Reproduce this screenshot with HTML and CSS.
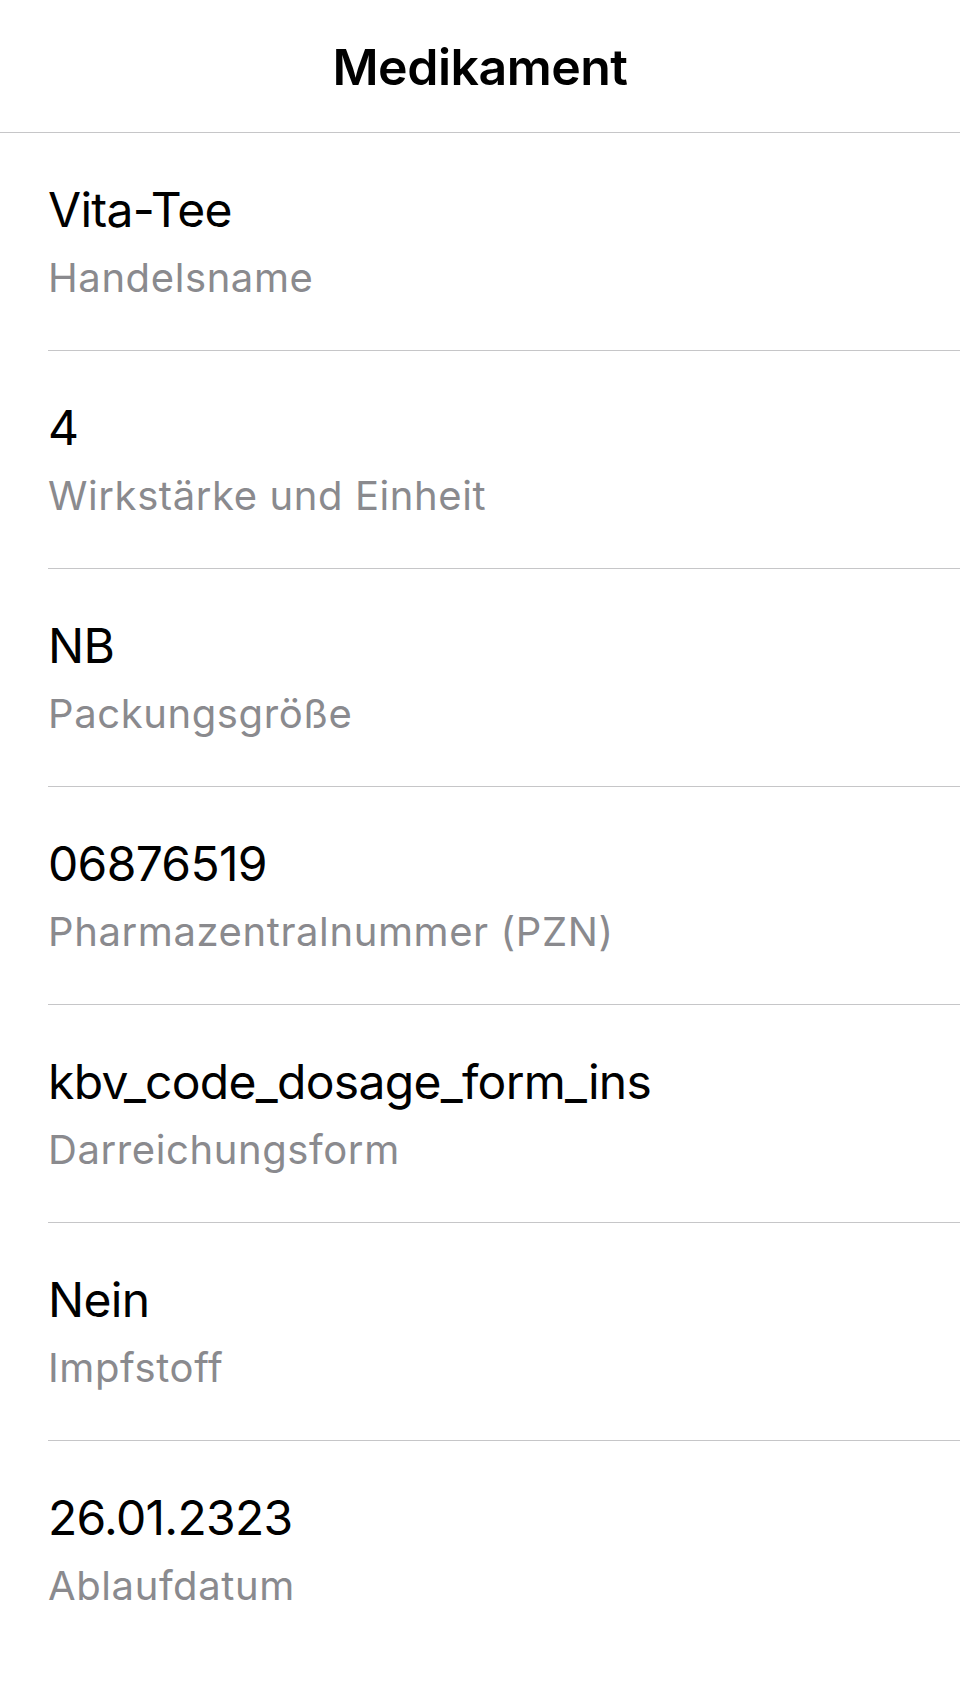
FILE: index.html
```html
<!DOCTYPE html>
<html lang="de">
<head>
<meta charset="utf-8">
<title>Medikament</title>
<link rel="stylesheet" href="styles.css">
</head>
<body>
<header class="nav">
  <h1 class="nav-title">Medikament</h1>
</header>
<main class="list">
  <div class="row">
    <div class="value">Vita-Tee</div>
    <div class="label">Handelsname</div>
  </div>
  <div class="row">
    <div class="value">4</div>
    <div class="label">Wirkstärke und Einheit</div>
  </div>
  <div class="row">
    <div class="value">NB</div>
    <div class="label">Packungsgröße</div>
  </div>
  <div class="row">
    <div class="value">06876519</div>
    <div class="label">Pharmazentralnummer (PZN)</div>
  </div>
  <div class="row">
    <div class="value">kbv_code_dosage_form_ins</div>
    <div class="label">Darreichungsform</div>
  </div>
  <div class="row">
    <div class="value">Nein</div>
    <div class="label">Impfstoff</div>
  </div>
  <div class="row">
    <div class="value">26.01.2323</div>
    <div class="label">Ablaufdatum</div>
  </div>
</main>
</body>
</html>
```

FILE: styles.css
```css
html, body {
  margin: 0;
  padding: 0;
  background: #ffffff;
}
body {
  font-family: Inter, "Noto Sans", "Liberation Sans", sans-serif;
  color: #000000;
  width: 960px;
  min-height: 1704px;
}
.nav {
  height: 132px;
  border-bottom: 1px solid #c6c6c8;
  display: flex;
  justify-content: center;
  align-items: flex-start;
  box-sizing: content-box;
}
.nav-title {
  margin: 0;
  padding-top: 37px;
  font-size: 50px;
  font-weight: 600;
  line-height: 60px;
  letter-spacing: -0.5px;
}
.list {
  padding-left: 48px;
}
.row {
  padding: 48px 0 49px 0;
  border-bottom: 1px solid #c6c6c8;
  display: flex;
  flex-direction: column;
  gap: 15px;
}
.row:last-child {
  border-bottom: none;
}
.value {
  font-size: 48px;
  line-height: 58px;
  letter-spacing: -0.7px;
}
.label {
  font-size: 40px;
  line-height: 47px;
  color: #8a8a8e;
  letter-spacing: 0.6px;
}
```
